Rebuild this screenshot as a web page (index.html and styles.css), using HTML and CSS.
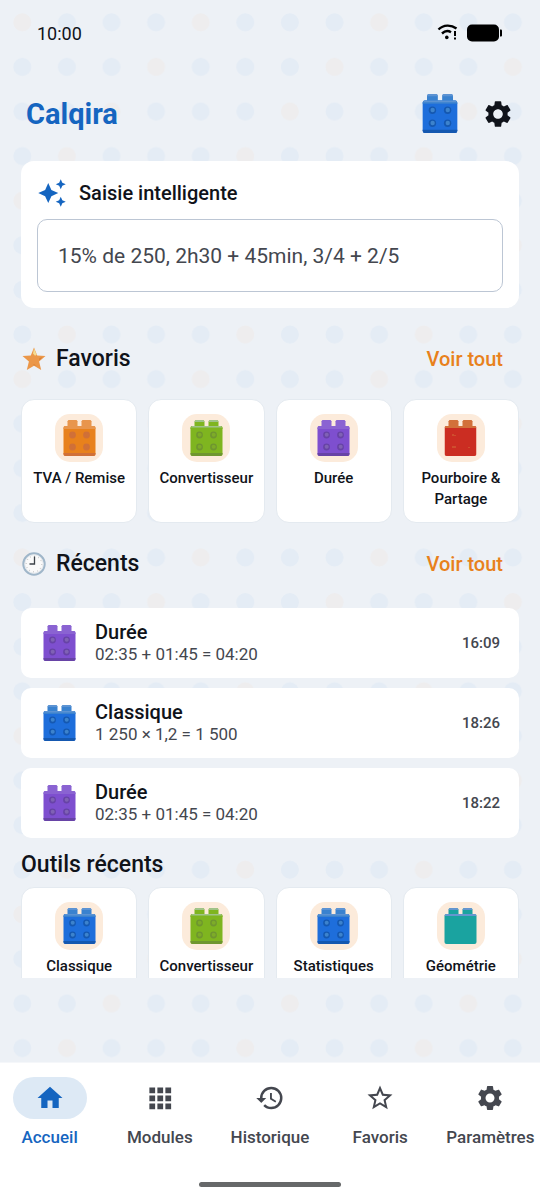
FILE: index.html
```html
<!DOCTYPE html>
<html lang="fr">
<head>
<meta charset="utf-8">
<meta name="viewport" content="width=device-width, initial-scale=1">
<title>Calqira</title>
<link rel="stylesheet" href="styles.css">
</head>
<body>
<svg class="defs" aria-hidden="true">
  <defs>
    <pattern id="dots" width="178.4" height="178.4" patternUnits="userSpaceOnUse">
      <g fill="#e4ecf5">
        <circle cx="66.9" cy="22.3" r="9"/><circle cx="111.5" cy="22.3" r="9"/><circle cx="156.1" cy="22.3" r="9"/>
        <circle cx="22.3" cy="66.9" r="9"/><circle cx="66.9" cy="66.9" r="9"/><circle cx="111.5" cy="66.9" r="9"/>
        <circle cx="22.3" cy="111.5" r="9"/><circle cx="66.9" cy="111.5" r="9"/><circle cx="156.1" cy="111.5" r="9"/>
        <circle cx="22.3" cy="156.1" r="9"/><circle cx="111.5" cy="156.1" r="9"/><circle cx="156.1" cy="156.1" r="9"/>
      </g>
      <g fill="#eeedee">
        <circle cx="22.3" cy="22.3" r="9"/><circle cx="156.1" cy="66.9" r="9"/><circle cx="111.5" cy="111.5" r="9"/><circle cx="66.9" cy="156.1" r="9"/>
      </g>
    </pattern>
    <symbol id="brick" viewBox="0 0 32 36">
      <path class="b-nub" d="M4 7V2a2 2 0 0 1 2-2h6a2 2 0 0 1 2 2v5zM18 7V2a2 2 0 0 1 2-2h6a2 2 0 0 1 2 2v5z"/>
      <path class="b-light" d="M4 2V1.500A2 2 0 0 1 6 0h6a2 2 0 0 1 2 1.500V2zM18 2v-.5A2 2 0 0 1 20 0h6a2 2 0 0 1 2 1.500V2z"/>
      <rect class="b-body" y="6" width="32" height="30" rx="2"/>
      <path class="b-nub" d="M0 9V8a2 2 0 0 1 2-2h28a2 2 0 0 1 2 2v1z"/>
      <path class="b-light" d="M.5 7.500A2 2 0 0 1 2 6h28a2 2 0 0 1 1.500 1.500z"/>
      <path class="b-dark" d="M0 33h32v1a2 2 0 0 1-2 2H2a2 2 0 0 1-2-2z"/>
      <g class="b-dark"><circle cx="9" cy="15" r="3.400"/><circle cx="23" cy="15" r="3.400"/><circle cx="9" cy="27" r="3.400"/><circle cx="23" cy="27" r="3.400"/></g>
      <g class="b-stud"><circle cx="9.200" cy="14.800" r="2"/><circle cx="23.200" cy="14.800" r="2"/><circle cx="9.200" cy="26.800" r="2"/><circle cx="23.200" cy="26.800" r="2"/></g>
    </symbol>
    <symbol id="brick-plain" viewBox="0 0 32 36">
      <path class="b-nub" d="M4 7V2a2 2 0 0 1 2-2h6a2 2 0 0 1 2 2v5zM18 7V2a2 2 0 0 1 2-2h6a2 2 0 0 1 2 2v5z"/>
      <path class="b-light" d="M4 2V1.500A2 2 0 0 1 6 0h6a2 2 0 0 1 2 1.500V2zM18 2v-.5A2 2 0 0 1 20 0h6a2 2 0 0 1 2 1.500V2z"/>
      <rect class="b-body" y="6" width="32" height="30" rx="2"/>
      <path class="b-light" d="M0 8a2 2 0 0 1 2-2h28a2 2 0 0 1 2 2z"/>
    </symbol>
    <symbol id="gear" viewBox="0 0 24 24">
      <path d="M19.140 12.940c.04-.3.060-.61.060-.94 0-.32-.02-.64-.07-.94l2.030-1.580c.18-.14.230-.41.120-.61l-1.920-3.320c-.12-.22-.37-.29-.59-.22l-2.390.96c-.5-.38-1.030-.7-1.620-.94l-.36-2.540c-.04-.24-.24-.41-.48-.41h-3.840c-.24 0-.43.170-.47.410l-.36 2.540c-.59.240-1.130.570-1.620.940l-2.390-.96c-.22-.08-.47 0-.59.220L2.740 8.870c-.12.210-.08.470.120.610l2.030 1.580c-.05.300-.09.630-.09.940s.020.640.070.940l-2.030 1.580c-.18.140-.23.410-.12.610l1.920 3.320c.120.220.370.290.590.220l2.390-.96c.5.380 1.030.700 1.620.940l.36 2.540c.05.240.240.410.480.410h3.840c.24 0 .44-.17.470-.41l.36-2.540c.59-.24 1.130-.56 1.620-.94l2.390.96c.22.080.470 0 .59-.22l1.920-3.320c.12-.22.070-.47-.12-.61l-2.010-1.580zM12 15.600c-1.980 0-3.600-1.620-3.600-3.600s1.620-3.600 3.600-3.600 3.600 1.620 3.600 3.600-1.620 3.600-3.600 3.600z"/>
    </symbol>
  </defs>
</svg>

<div class="app">
  <svg class="backdrop" aria-hidden="true"><rect width="100%" height="100%" fill="url(#dots)"/></svg>

  <div class="status">
    <span>10:00</span>
    <svg width="66" height="20" viewBox="0 0 66 20" aria-hidden="true">
      <g fill="none" stroke="#000" stroke-width="2.400">
        <path d="M1.500 6.500C6.500 1.500 14 1.500 19.500 5.500"/><path d="M5 10.500c3-2.800 6.500-2.800 9-1.200"/>
      </g>
      <circle cx="9.800" cy="14.400" r="1.800"/><path d="M17 8h2v5h-2zM17 14.500h2v2h-2z"/>
      <rect x="30" y="1.500" width="32" height="17" rx="5"/><path d="M63 6.500h1a1 1 0 0 1 1 1v5a1 1 0 0 1-1 1h-1z"/>
    </svg>
  </div>

  <header class="topbar">
    <h1>Calqira</h1>
    <svg class="brick brick-lg blue" aria-hidden="true"><use href="#brick"/></svg>
    <button class="icon-btn" aria-label="Paramètres"><svg class="gear"><use href="#gear"/></svg></button>
  </header>

  <main class="content">
    <section class="smart">
      <label for="smart-input" class="smart-label">
        <svg width="30" height="30" viewBox="0 0 24 24" fill="#1565c0" aria-hidden="true"><path d="M19 9l1.250-2.750L23 5l-2.750-1.250L19 1l-1.250 2.750L15 5l2.750 1.250L19 9zm-7.500.5L9 4 6.500 9.500 1 12l5.500 2.500L9 20l2.500-5.500L17 12l-5.500-2.500zM19 15l-1.250 2.750L15 19l2.750 1.250L19 23l1.250-2.750L23 19l-2.750-1.250L19 15z"/></svg>
        Saisie intelligente
      </label>
      <input id="smart-input" type="text" placeholder="15% de 250, 2h30 + 45min, 3/4 + 2/5">
    </section>

    <div class="section-head">
      <svg width="24" height="24" viewBox="0 0 24 24" aria-hidden="true"><path fill="#eb9749" d="M12 .5l3.200 7.900 8.300.6-6.400 5.400 2.100 8.600-7.200-4.200L4.800 23l2.100-8.600L.5 9l8.300-.6z"/><path fill="#f3dc93" d="M12 1.500l2.700 6.200-1.700 1.100-2-2.300z"/><path fill="#d97d35" d="M17.500 11l3-.8-3.500 3.300zM11 18l1-.7 2.500 1.500-2.500-.5z"/></svg>
      <h2>Favoris</h2>
      <button class="more">Voir tout</button>
    </div>
    <div class="tools">
      <button class="tool"><span class="badge"><svg class="brick orange"><use href="#brick"/></svg></span>TVA / Remise</button>
      <button class="tool"><span class="badge"><svg class="brick green"><use href="#brick"/></svg></span>Convertisseur</button>
      <button class="tool"><span class="badge"><svg class="brick purple"><use href="#brick"/></svg></span>Durée</button>
      <button class="tool"><span class="badge"><svg class="brick red" viewBox="0 0 32 36"><use href="#brick-plain" width="32" height="36"/><path fill="#d2703a" d="M8 14h1v2H8zM10 15h1v1h-1zM8 26h1v2H8zM10 26h1v2h-1zM24 27h1v1h-1z"/></svg></span>Pourboire &amp; Partage</button>
    </div>

    <div class="section-head">
      <svg width="24" height="24" viewBox="0 0 24 24" aria-hidden="true"><circle cx="12" cy="12" r="10.700" fill="#fafafa" stroke="#9fb6c9" stroke-width="2"/><circle cx="12" cy="12" r="9.300" fill="none" stroke="#d5dde4" stroke-width=".7"/><g stroke="#aaa" stroke-width="1" fill="none"><circle cx="12" cy="12" r="7.800" stroke-dasharray=".8 3.284"/></g><path d="M12.500 4.500V12H7.500" fill="none" stroke="#3c4248" stroke-width="1.300"/></svg>
      <h2>Récents</h2>
      <button class="more">Voir tout</button>
    </div>
    <ul class="recents">
      <li><svg class="brick purple"><use href="#brick"/></svg><div class="entry"><h3>Durée</h3><p>02:35 + 01:45 = 04:20</p></div><time>16:09</time></li>
      <li><svg class="brick blue"><use href="#brick"/></svg><div class="entry"><h3>Classique</h3><p>1 250 × 1,2 = 1 500</p></div><time>18:26</time></li>
      <li><svg class="brick purple"><use href="#brick"/></svg><div class="entry"><h3>Durée</h3><p>02:35 + 01:45 = 04:20</p></div><time>18:22</time></li>
    </ul>

    <h2 class="tools-title">Outils récents</h2>
    <div class="tools">
      <button class="tool"><span class="badge"><svg class="brick blue"><use href="#brick"/></svg></span>Classique</button>
      <button class="tool"><span class="badge"><svg class="brick green"><use href="#brick"/></svg></span>Convertisseur</button>
      <button class="tool"><span class="badge"><svg class="brick blue"><use href="#brick"/></svg></span>Statistiques</button>
      <button class="tool"><span class="badge"><svg class="brick teal"><use href="#brick-plain"/></svg></span>Géométrie</button>
    </div>
  </main>

  <footer class="bottom">
    <nav class="tabs">
      <a class="tab active" href="#accueil"><span class="pill"><svg viewBox="0 0 24 24"><path d="M10 20v-6h4v6h5v-8h3L12 3 2 12h3v8z"/></svg></span>Accueil</a>
      <a class="tab" href="#modules"><span class="pill"><svg viewBox="0 0 24 24"><path d="M3.500 3.500h4.600v4.600H3.500zM9.900 3.500h4.600v4.600H9.900zM16.300 3.500h4.600v4.600h-4.600zM3.500 9.900h4.600v4.600H3.500zM9.900 9.900h4.600v4.600H9.900zM16.300 9.900h4.600v4.600h-4.600zM3.500 16.300h4.600v4.600H3.500zM9.900 16.300h4.600v4.600H9.900zM16.300 16.300h4.600v4.600h-4.600z"/></svg></span>Modules</a>
      <a class="tab" href="#historique"><span class="pill"><svg viewBox="0 0 24 24"><path d="M13 3a9 9 0 0 0-9 9H1l3.890 3.890.070.140L9 12H6a7 7 0 1 1 7 7c-1.930 0-3.680-.79-4.940-2.060l-1.420 1.420A8.954 8.954 0 0 0 13 21a9 9 0 0 0 0-18zm-1 5v5l4.280 2.540.720-1.210-3.500-2.080V8H12z"/></svg></span>Historique</a>
      <a class="tab" href="#favoris"><span class="pill"><svg viewBox="0 0 24 24"><path d="M22 9.240l-7.190-.62L12 2 9.190 8.630 2 9.240l5.460 4.730L5.820 21 12 17.270 18.180 21l-1.630-7.030L22 9.240zM12 15.400l-3.760 2.270 1-4.280-3.320-2.880 4.380-.38L12 6.100l1.710 4.040 4.380.38-3.320 2.880 1 4.280L12 15.400z"/></svg></span>Favoris</a>
      <a class="tab" href="#parametres"><span class="pill"><svg><use href="#gear"/></svg></span>Paramètres</a>
    </nav>
    <div class="handle"></div>
  </footer>
</div>
</body>
</html>
```
FILE: styles.css
```css
* { box-sizing: border-box; }
body, h1, h2, h3, p, ul { margin: 0; padding: 0; }
body {
  font-family: Roboto, "Liberation Sans", sans-serif;
  color: #10131a;
}
button, input { font: inherit; color: inherit; }
button { border: 0; padding: 0; background: none; cursor: pointer; }
.defs { position: absolute; width: 0; height: 0; }

.app {
  position: relative;
  isolation: isolate;
  display: flex;
  flex-direction: column;
  height: 100vh;
  background: #edf1f6;
}
.backdrop {
  position: absolute;
  inset: 0;
  z-index: -1;
  width: 100%;
  height: 100%;
}

.status {
  display: flex;
  align-items: center;
  justify-content: space-between;
  height: 66px;
  padding: 0 37px;
  font-size: 18px;
}
.topbar {
  display: flex;
  align-items: center;
  height: 95px;
  padding: 0 26px;
}
.topbar h1 {
  flex: 1;
  color: #1565c0;
  font-size: 29px;
  line-height: 36px;
  font-weight: 700;
}
.icon-btn { display: flex; margin-left: 24px; }
.gear { width: 32px; height: 32px; fill: #10131a; }

/* toy bricks */
.brick { display: block; flex: none; width: 33px; height: 36px; }
.brick-lg { width: 36px; height: 39px; }
.b-body { fill: var(--body); }
.b-nub { fill: var(--nub); }
.b-light { fill: var(--light); }
.b-dark { fill: var(--dark); }
.b-stud { fill: var(--stud); }
.blue { --body: #1e6edb; --nub: #3a82cf; --light: #5c93d3; --dark: #1558b0; --stud: #3d83cc; }
.purple { --body: #7e4fcf; --nub: #8a63d2; --light: #8a63d2; --dark: #6743a6; --stud: #7f62b4; }
.orange { --body: #e8811c; --nub: #e8954c; --light: #e8954c; --dark: #d07038; --stud: #d07038; }
.green { --body: #7fb520; --nub: #7fb520; --light: #a0c389; --dark: #6f9630; --stud: #7dac28; }
.red { --body: #cb2d22; --nub: #d2703a; --light: #d2703a; }
.teal { --body: #1aa3a0; --nub: #1aa3a0; --light: #6596cf; }

.content {
  flex: 1;
  min-height: 0;
  margin-bottom: 84px;
  padding: 0 21px;
  overflow-y: auto;
  scrollbar-width: none;
}

.smart {
  margin-bottom: 10px;
  padding: 16px;
  border-radius: 13px;
  background: #fff;
}
.smart-label {
  display: flex;
  align-items: center;
  gap: 12px;
  height: 32px;
  font-size: 20px;
  font-weight: 500;
}
.smart input {
  display: block;
  width: 100%;
  height: 73px;
  margin-top: 10px;
  padding: 0 20px;
  border: 1px solid #bcc6d4;
  border-radius: 10px;
  background: #fff;
  font-size: 21px;
}
.smart input::placeholder { color: #44474f; opacity: 1; }

.section-head {
  display: flex;
  align-items: center;
  gap: 10px;
  height: 81px;
  padding: 0 16px 0 1px;
}
h2 { font-size: 23px; line-height: 30px; font-weight: 500; }
.more {
  margin-left: auto;
  color: #e8811c;
  font-size: 20px;
  font-weight: 500;
}

.tools {
  display: grid;
  grid-template-columns: repeat(4, 1fr);
  gap: 11px;
}
.tool {
  display: flex;
  flex-direction: column;
  align-items: center;
  min-height: 124px;
  padding: 14px 4px 12px;
  border: 1px solid #e4eaf0;
  border-radius: 13px;
  background: #fff;
  font-size: 15px;
  line-height: 21px;
  font-weight: 500;
}
.badge {
  display: grid;
  place-items: center;
  width: 48px;
  height: 48px;
  margin-bottom: 6px;
  border-radius: 15px;
  background: #fcebdb;
}

.recents {
  display: grid;
  gap: 10px;
  margin-top: 4px;
  list-style: none;
}
.recents li {
  display: flex;
  align-items: center;
  height: 70px;
  padding: 0 19px 0 22px;
  border-radius: 10px;
  background: #fff;
}
.entry { flex: 1; margin-left: 19px; }
.entry h3 { font-size: 20px; line-height: 22px; font-weight: 500; }
.entry p { color: #44474f; font-size: 17px; line-height: 22px; }
time { color: #44474f; font-size: 15px; font-weight: 500; }
.tools-title { margin: 12px 0 7px; }

.bottom {
  padding: 14px 0 13px;
  border-top: 1px solid #f5f7fa;
  background: #fff;
}
.tabs {
  display: grid;
  grid-template-columns: repeat(5, 1fr);
  gap: 11px;
}
.tab {
  display: flex;
  flex-direction: column;
  align-items: center;
  gap: 7px;
  color: #44474f;
  font-size: 17px;
  line-height: 22px;
  font-weight: 500;
  text-decoration: none;
}
.tab.active { color: #1565c0; }
.pill {
  display: grid;
  place-items: center;
  width: 74px;
  height: 42px;
  border-radius: 21px;
}
.pill svg { width: 30px; height: 30px; fill: currentColor; }
.active .pill { background: #dde9f5; }
.handle {
  width: 142px;
  height: 5px;
  margin: 34px auto 0;
  border-radius: 3px;
  background: #666869;
}
```
